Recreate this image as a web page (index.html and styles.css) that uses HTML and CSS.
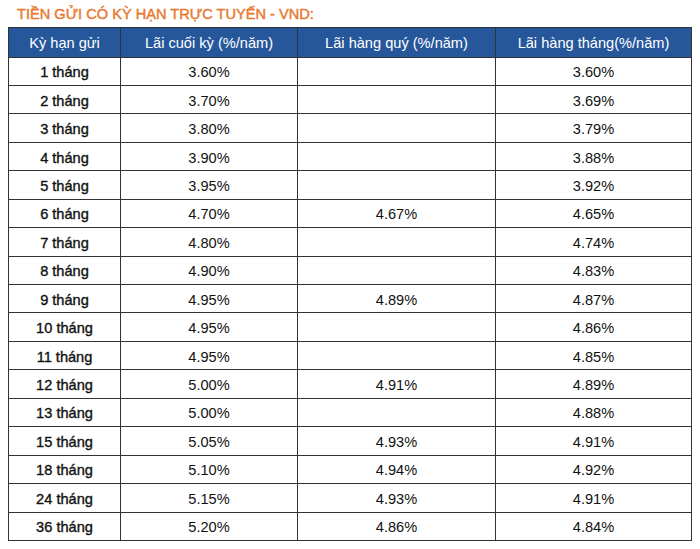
FILE: index.html
```html
<!DOCTYPE html>
<html lang="vi">
<head>
<meta charset="utf-8">
<title>Tiền gửi có kỳ hạn trực tuyến - VND</title>
<link rel="stylesheet" href="styles.css">
</head>
<body>
<h2 class="title">TIỀN GỬI CÓ KỲ HẠN TRỰC TUYẾN - VND:</h2>
<table class="rates">
<colgroup>
<col class="c1"><col class="c2"><col class="c3"><col class="c4">
</colgroup>
<thead>
<tr><th>Kỳ hạn gửi</th><th>Lãi cuối kỳ (%/năm)</th><th>Lãi hàng quý (%/năm)</th><th>Lãi hàng tháng(%/năm)</th></tr>
</thead>
<tbody>
<tr><td class="term">1 tháng</td><td>3.60%</td><td></td><td>3.60%</td></tr>
<tr><td class="term">2 tháng</td><td>3.70%</td><td></td><td>3.69%</td></tr>
<tr><td class="term">3 tháng</td><td>3.80%</td><td></td><td>3.79%</td></tr>
<tr><td class="term">4 tháng</td><td>3.90%</td><td></td><td>3.88%</td></tr>
<tr><td class="term">5 tháng</td><td>3.95%</td><td></td><td>3.92%</td></tr>
<tr><td class="term">6 tháng</td><td>4.70%</td><td>4.67%</td><td>4.65%</td></tr>
<tr><td class="term">7 tháng</td><td>4.80%</td><td></td><td>4.74%</td></tr>
<tr><td class="term">8 tháng</td><td>4.90%</td><td></td><td>4.83%</td></tr>
<tr><td class="term">9 tháng</td><td>4.95%</td><td>4.89%</td><td>4.87%</td></tr>
<tr><td class="term">10 tháng</td><td>4.95%</td><td></td><td>4.86%</td></tr>
<tr><td class="term">11 tháng</td><td>4.95%</td><td></td><td>4.85%</td></tr>
<tr><td class="term">12 tháng</td><td>5.00%</td><td>4.91%</td><td>4.89%</td></tr>
<tr><td class="term">13 tháng</td><td>5.00%</td><td></td><td>4.88%</td></tr>
<tr><td class="term">15 tháng</td><td>5.05%</td><td>4.93%</td><td>4.91%</td></tr>
<tr><td class="term">18 tháng</td><td>5.10%</td><td>4.94%</td><td>4.92%</td></tr>
<tr><td class="term">24 tháng</td><td>5.15%</td><td>4.93%</td><td>4.91%</td></tr>
<tr><td class="term">36 tháng</td><td>5.20%</td><td>4.86%</td><td>4.84%</td></tr>
</tbody>
</table>
</body>
</html>
```
FILE: styles.css
```css
html, body {
  margin: 0;
  padding: 0;
  background: #ffffff;
}
body {
  font-family: "Liberation Sans", Arial, sans-serif;
  color: #111111;
}
.title {
  margin: 0;
  padding: 6px 0 0 17px;
  height: 27px;
  box-sizing: border-box;
  font-size: 14.6px;
  line-height: 17px;
  font-weight: 400;
  -webkit-text-stroke: 0.45px #e8792f;
  color: #e8792f;
  letter-spacing: 0;
}
.rates {
  margin-left: 8px;
  width: 683px;
  border-collapse: collapse;
  table-layout: fixed;
  font-size: 14.6px;
  border: 1.5px solid #555555;
}
.c1 { width: 112px; }
.c2 { width: 177px; }
.c3 { width: 198px; }
.c4 { width: 196px; }
.rates th,
.rates td {
  border: 1px solid #333333;
  text-align: center;
  padding: 2px 0 0;
}
.rates thead tr {
  height: 29.5px;
}
.rates th {
  background: #26579b;
  color: #ffffff;
  font-weight: 400;
  padding-top: 1px;
}
.rates tbody tr {
  height: 28.45px;
}
.rates td {
  color: #111111;
}
.rates td.term {
  -webkit-text-stroke: 0.35px #111111;
}
```
